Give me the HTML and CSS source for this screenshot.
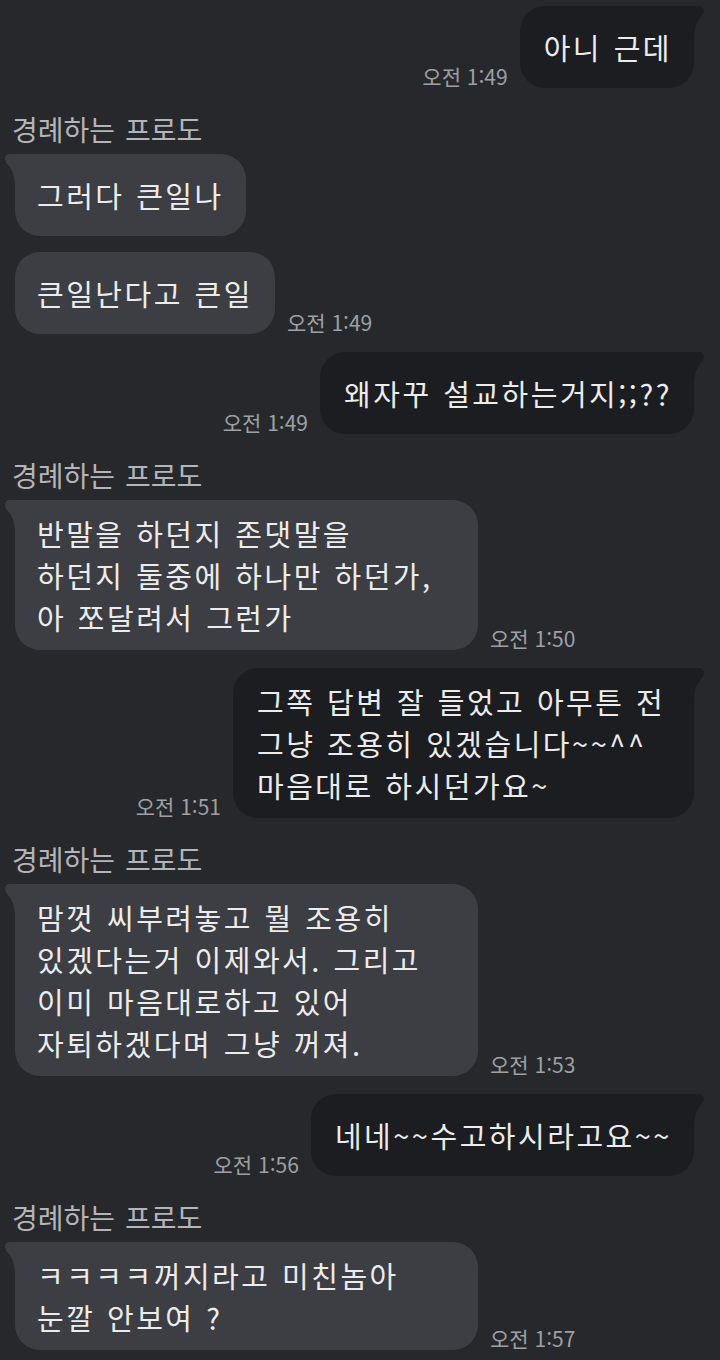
FILE: index.html
```html
<!DOCTYPE html>
<html lang="ko">
<head>
<meta charset="utf-8">
<title>Chat</title>
<link rel="stylesheet" href="styles.css">
</head>
<body>
<div class="chat">
  <div class="row sent first">
    <span class="time">오전 1:49</span>
    <div class="bubble tail">아니 근데</div>
  </div>

  <div class="name">경례하는 프로도</div>
  <div class="row recv">
    <div class="bubble tail">그러다 큰일나</div>
  </div>
  <div class="row recv">
    <div class="bubble">큰일난다고 큰일</div>
    <span class="time">오전 1:49</span>
  </div>

  <div class="row sent">
    <span class="time">오전 1:49</span>
    <div class="bubble tail">왜자꾸 설교하는거지;;??</div>
  </div>

  <div class="name">경례하는 프로도</div>
  <div class="row recv">
    <div class="bubble tail wide">반말을 하던지 존댓말을<br>하던지 둘중에 하나만 하던가,<br>아 쪼달려서 그런가</div>
    <span class="time">오전 1:50</span>
  </div>

  <div class="row sent">
    <span class="time">오전 1:51</span>
    <div class="bubble tail wide">그쪽 답변 잘 들었고 아무튼 전<br>그냥 조용히 있겠습니다~~^^<br>마음대로 하시던가요~</div>
  </div>

  <div class="name">경례하는 프로도</div>
  <div class="row recv">
    <div class="bubble tail wide">맘껏 씨부려놓고 뭘 조용히<br>있겠다는거 이제와서. 그리고<br>이미 마음대로하고 있어<br>자퇴하겠다며 그냥 꺼져.</div>
    <span class="time">오전 1:53</span>
  </div>

  <div class="row sent">
    <span class="time">오전 1:56</span>
    <div class="bubble tail">네네~~수고하시라고요~~</div>
  </div>

  <div class="name">경례하는 프로도</div>
  <div class="row recv">
    <div class="bubble tail wide">ㅋㅋㅋㅋ꺼지라고 미친놈아<br>눈깔 안보여 ?</div>
    <span class="time">오전 1:57</span>
  </div>
</div>
</body>
</html>
```

FILE: styles.css
```css
html, body {
  margin: 0;
  padding: 0;
}

body {
  background: #26282c;
  font-family: "Noto Sans CJK KR", "Noto Sans", sans-serif;
  color: #ececed;
  height: 1360px;
  overflow: hidden;
}

.chat {
  display: flex;
  flex-direction: column;
  padding: 6px 26px 0 15px;
}

.row {
  display: flex;
  align-items: flex-end;
  gap: 12px;
  margin-top: 16px;
}

.row.first {
  margin-top: 0;
}

.recv + .sent {
  margin-top: 18px;
}

.row.sent {
  justify-content: flex-end;
}

.row.recv {
  justify-content: flex-start;
}

.name {
  margin-top: 26px;
  margin-bottom: 10px;
  margin-left: -3px;
  font-size: 28px;
  line-height: 30px;
  word-spacing: 2px;
  color: #b4b5b8;
}

.name + .row {
  margin-top: 0;
}

.bubble {
  position: relative;
  box-sizing: border-box;
  min-height: 82px;
  display: flex;
  align-items: center;
  padding: 12px 22px 12px 22px;
  font-size: 29px;
  line-height: 42px;
  letter-spacing: 2.5px;
  word-spacing: 1px;
  white-space: nowrap;
  border-radius: 25px;
}

.bubble.wide {
  width: 463px;
}

.recv .bubble {
  background: #3c3e43;
}

.sent .bubble {
  background: #1c1d21;
  padding: 12px 22px 12px 24px;
}

.sent .bubble.wide {
  width: 461px;
}

.recv .bubble.tail {
  border-top-left-radius: 0;
}

.sent .bubble.tail {
  border-top-right-radius: 0;
}

.bubble.tail::before {
  content: "";
  position: absolute;
  top: 0;
  width: 20px;
  height: 30px;
  background: inherit;
}

.recv .bubble.tail::before {
  left: -10px;
  clip-path: path("M20 0 L5 0 Q0 0 0 5 Q0 8 3 11 Q9 17 10 30 L20 30 Z");
}

.sent .bubble.tail::before {
  right: -10px;
  clip-path: path("M0 0 L15 0 Q20 0 20 5 Q20 8 17 11 Q11 17 10 30 L0 30 Z");
}

.time {
  flex: none;
  font-size: 21px;
  line-height: 24px;
  color: #9fa0a3;
  white-space: nowrap;
}
```
